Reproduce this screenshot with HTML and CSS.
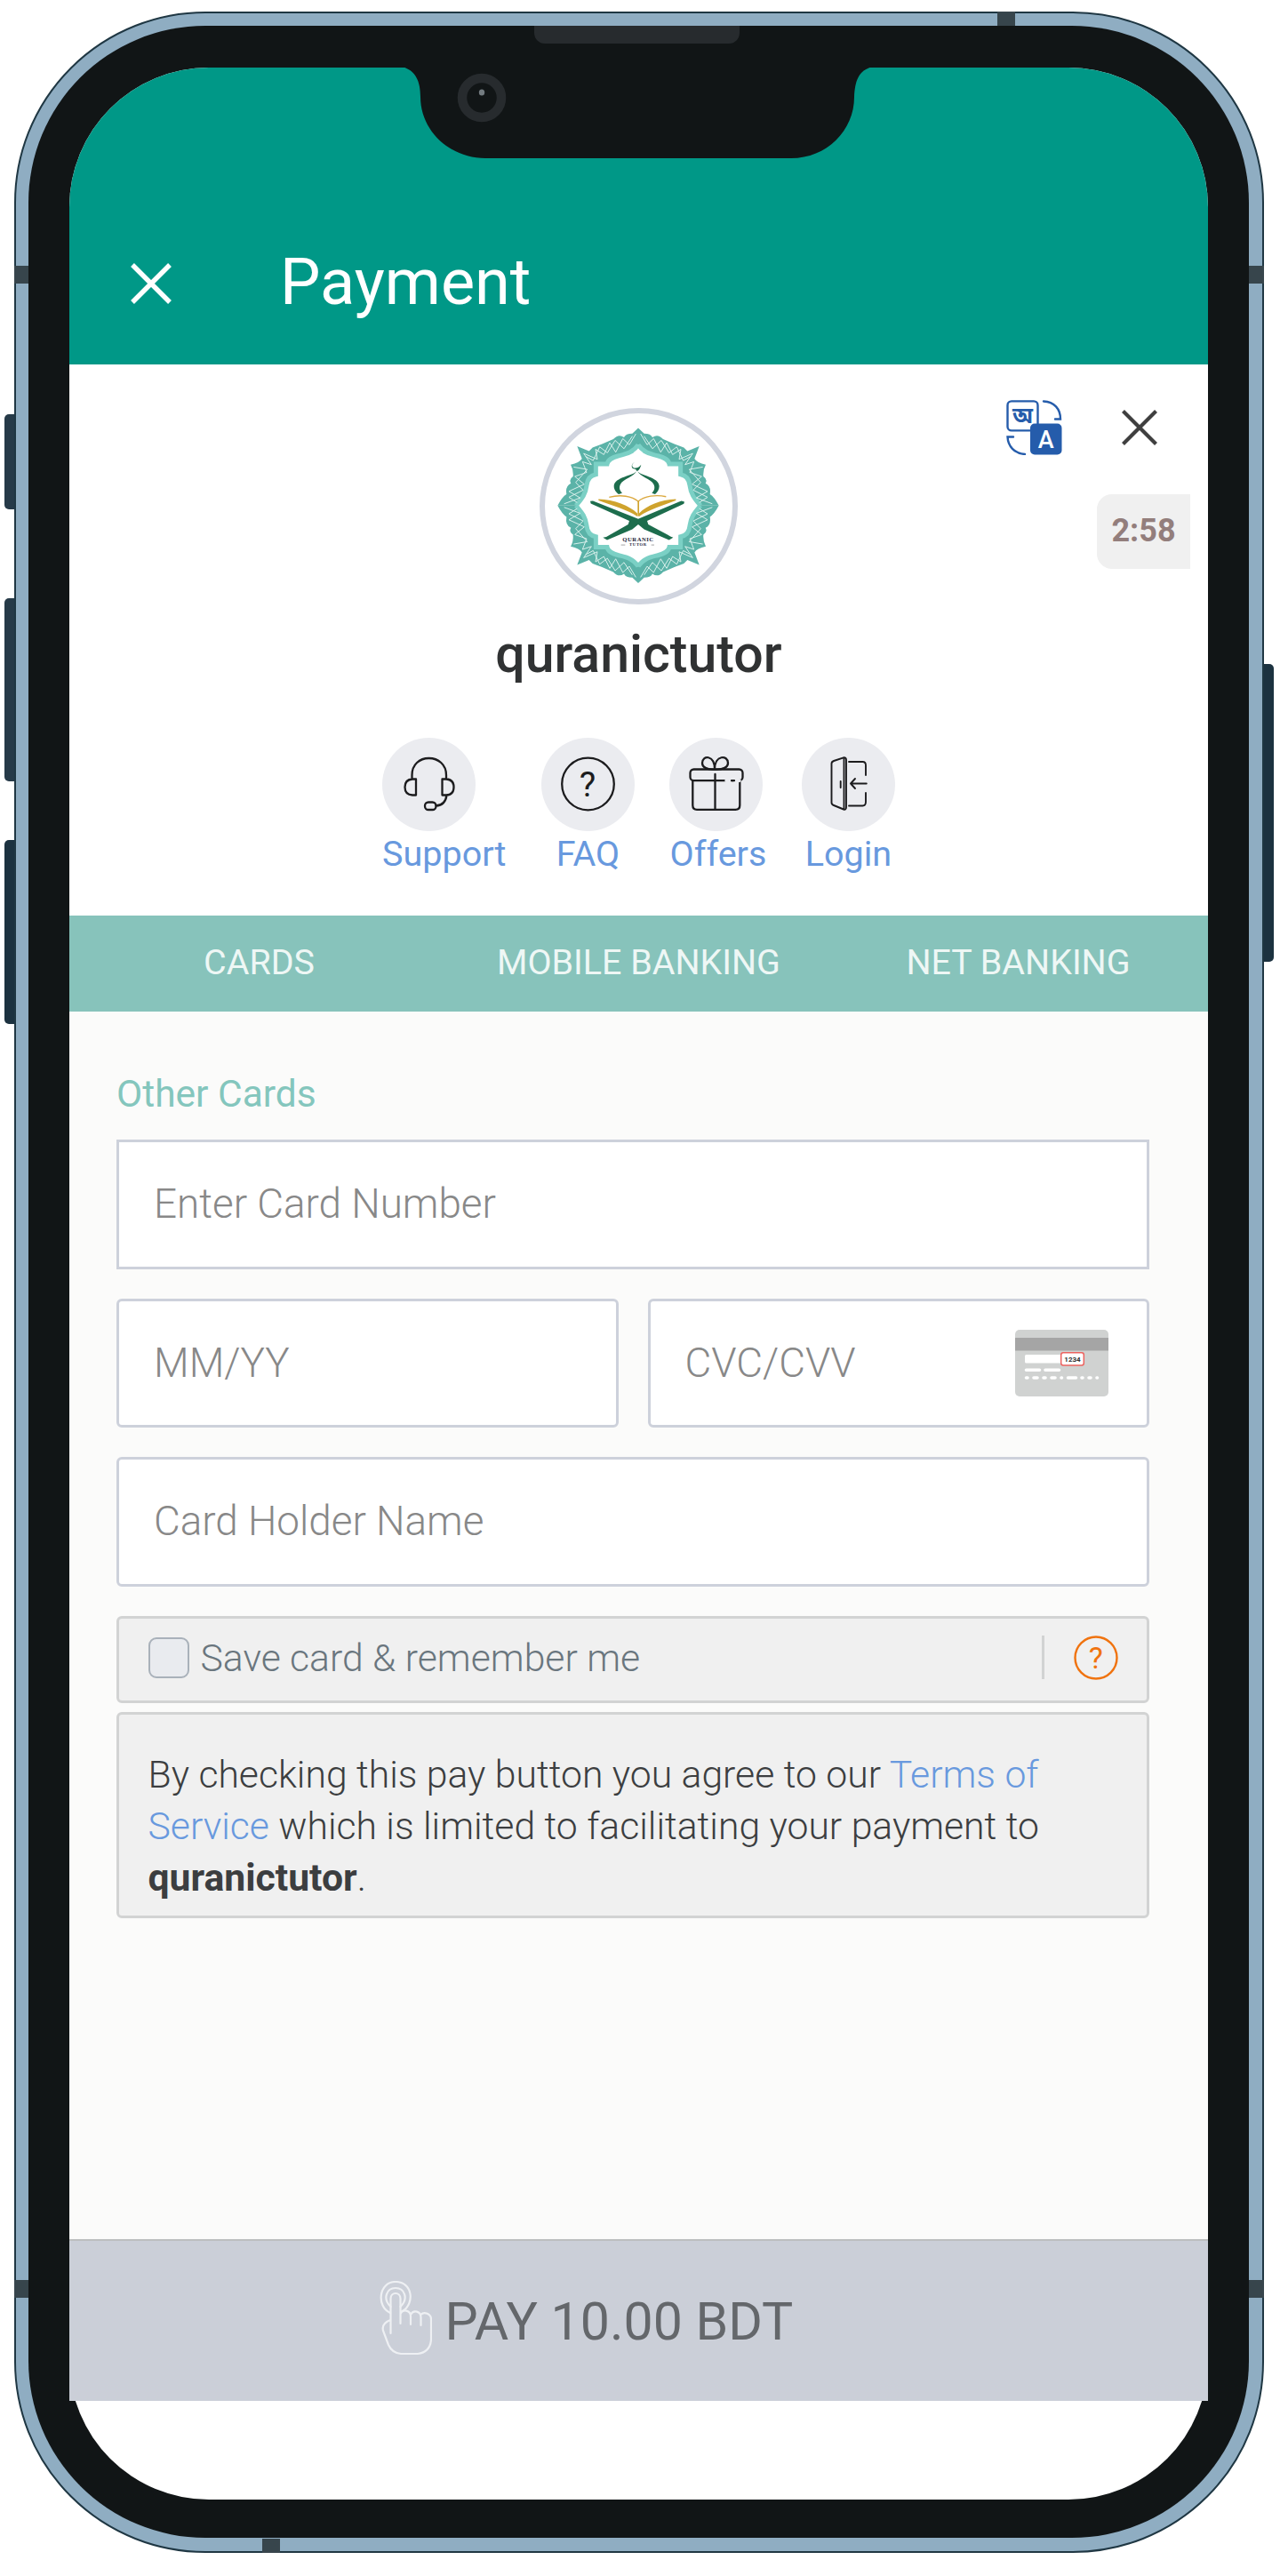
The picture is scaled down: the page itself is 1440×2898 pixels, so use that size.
FILE: index.html
```html
<!DOCTYPE html>
<html lang="en">
<head>
<meta charset="utf-8">
<title>Payment</title>
<link rel="stylesheet" href="styles.css">
</head>
<body>
<div class="device">
  <i class="key key-mute"></i><i class="key key-up"></i><i class="key key-down"></i><i class="key key-power"></i>
  <div class="frame">
    <i class="band band-top"></i><i class="band band-bottom"></i>
    <i class="band band-lt"></i><i class="band band-rt"></i><i class="band band-lb"></i><i class="band band-rb"></i>
    <div class="bezel">
      <i class="speaker"></i>
      <main class="screen">
        <svg class="notch" viewBox="0 0 540 104" aria-hidden="true">
          <path d="M0 0H8C24 4 29 17 29 34C29 72 62 103 102 103H446C486 103 517 72 517 34C518 17 521 4 538 0V-2H0Z" fill="#111516"/>
          <circle cx="98" cy="35" r="22" fill="none" stroke="#272b2e" stroke-width="10.5"/>
          <ellipse cx="98" cy="29" rx="3.2" ry="3.6" fill="#737b80"/>
        </svg>
        <header class="app-bar">
          <svg class="app-close" viewBox="0 0 46 46"><path d="M2 2L44 44M44 2L2 44" stroke="#fff" stroke-width="5.4"/></svg>
          <h1>Payment</h1>
        </header>

        <section class="merchant">
          <div class="corner">
            <svg class="translate" viewBox="0 0 63 62">
              <g fill="none" stroke="#255cab" stroke-width="2.4" stroke-linecap="round">
                <rect x="1.5" y="1.4" width="34" height="33" rx="4.5"/>
                <path d="M42 1.5C54 2 61 10 61 21.5H55M8 41.5H1.5C2 52 9 60 21 61"/>
              </g>
              <rect x="27" y="26.5" width="35.500" height="35" rx="5" fill="#255cab"/>
              <text class="bn" x="18.500" y="26" text-anchor="middle">অ</text>
              <text class="latin" x="44.800" y="54" text-anchor="middle">A</text>
            </svg>
            <svg class="close" viewBox="0 0 40 40"><path d="M1.500 1.500L38.500 38.500M38.500 1.500L1.500 38.500" stroke="#3f3f3f" stroke-width="4.200"/></svg>
          </div>
          <div class="timer">2:58</div>

          <div class="logo">
            <svg viewBox="-315 -311 630 622">
              <defs>
                <g id="quarter">
                  <path fill="#5bb3a8" d="M0 -262L-20 -243Q-42 -243 -48 -230Q-66 -244 -84 -224L-122 -208L-154 -196L-166 -184L-206 -200L-190 -158Q-198 -144 -228 -138Q-218 -120 -220 -98Q-235 -88 -227 -75Q-247 -66 -242 -38Q-256 -30 -272 0H-205C-186 -30 -172 -45 -172 -78C-170 -98 -152 -105 -140 -108V-140H-104C-98 -158 -80 -164 -62 -168C-32 -174 -12 -188 0 -207Z"/>
                  <path fill="none" stroke="#7bd0c5" stroke-width="15" d="M0 -205C-18 -178 -42 -174 -66 -168C-88 -162 -102 -156 -105 -140H-143V-105C-160 -102 -172 -90 -174 -68C-178 -36 -192 -22 -210 0"/>
                  <path fill="none" stroke="#d9f0ec" stroke-width="3" d="M-8 -242L-30 -205L-52 -226L-76 -180L-96 -212L-116 -172L-144 -190L-138 -156L-184 -176L-158 -138L-188 -148L-174 -112L-214 -98L-182 -72L-234 -48L-196 -26L-250 -6M-20 -234L-48 -192L-78 -220L-104 -178L-130 -198L-152 -152L-178 -166M-218 -130L-172 -122L-211 -78L-186 -52L-234 -28L-206 -10"/>
                </g>
              </defs>
              <use href="#quarter"/><use href="#quarter" transform="scale(-1 1)"/>
              <use href="#quarter" transform="scale(1 -1)"/><use href="#quarter" transform="scale(-1 -1)"/>
              <g fill="#1d6d4d">
                <path d="M-5 -118C-12 -100 -82 -98 -82 -65C-82 -53 -74 -44 -66 -38L-54 -42C-62 -50 -66 -60 -60 -72C-50 -92 -14 -96 -5 -118ZM-3 -118C4 -100 71 -98 71 -65C71 -53 64 -44 57 -38L46 -42C54 -50 58 -60 52 -72C42 -92 6 -96 -3 -118Z"/>
                <path d="M-12 -148Q-28 -134 -14 -127Q-2 -124 10 -138Q6 -122 -2 -117H-6L-8 -122Q-28 -124 -20 -140Z"/>
                <path d="M-162 -15L-153 -16L0 45L146 -16L156 -13L154 -6L30 52L34 64L100 99Q108 105 118 108L104 116L20 80L0 64L-20 80L-105 116L-119 108Q-106 107 -96 99L-34 64L-30 52L-160 -7Z"/>
              </g>
              <g fill="#cfa32d">
                <path d="M-134 -22C-80 -20 -30 0 -3 26V37C-40 12 -90 0 -134 -17ZM127 -22C75 -20 28 0 3 26V37C38 12 85 0 127 -17Z"/>
                <path d="M-98 -28C-60 -38 -20 -32 0 -14C20 -32 60 -38 94 -30" fill="none" stroke="#dba83d" stroke-width="4"/>
                <path d="M-2 -14H3V36H-2Z"/>
              </g>
              <text class="logo-name" y="120" text-anchor="middle">QURANIC</text>
              <text class="logo-sub" y="137" text-anchor="middle">TUTOR</text>
              <path d="M-58 133H-44M44 133H54" stroke="#777" stroke-width="2"/>
            </svg>
          </div>
          <h2>quranictutor</h2>

          <nav class="links">
            <a class="link link-start">
              <svg viewBox="0 0 105 105"><g><path d="M33.500 46V42C33.500 30 42 23 52.500 23S72 30 72 42V46M38 46.500V64.500H34Q25.500 64 25.500 55.500T34 46.500ZM67.500 46.500V64.500H72Q80.500 64 80.500 55.500T72 46.500ZM72.500 64.500Q71 76 60.500 76.500"/><rect x="48" y="72.500" width="12.500" height="8.500" rx="4"/></g></svg>
              <span>Support</span>
            </a>
            <a class="link">
              <svg viewBox="0 0 105 105"><circle class="ln" cx="52.500" cy="52" r="29.300"/><text x="52" y="66" text-anchor="middle">?</text></svg>
              <span>FAQ</span>
            </a>
            <a class="link link-start">
              <svg viewBox="0 0 105 105"><g><rect x="23.500" y="35.500" width="59" height="12.700" rx="4"/><path d="M26.300 48V76Q26.300 80.800 31 80.800H74.500Q79.300 80.800 79.300 76V48M51.500 41V80.800M51 35.500C42 36 37 33 37 28.500C37 19 51 19 51 35.500C51 19 66 19 66 28.500C66 33 61 36 51 35.500"/><path d="M64 48.200H69M73 48.200H79" stroke="#ebecf0" stroke-width="3.500"/><path d="M70 48.200H73"/></g></svg>
              <span>Offers</span>
            </a>
            <a class="link">
              <svg viewBox="0 0 105 105"><g class="fine"><path d="M33.500 29Q33.500 27 36 26L47 22.300Q50 22 50 25V78Q50 81.500 47 80.500L36 76Q33.500 75 33.500 73ZM47.500 24V79M43.700 49V56M53 27H68.500Q72 27 72 31V42M72 62V72Q72 76.500 68.500 76.500H53M72.800 51.500H55M60 46L55 51.500L60 57"/></g></svg>
              <span>Login</span>
            </a>
          </nav>
        </section>

        <nav class="tabs"><a>CARDS</a><a>MOBILE BANKING</a><a>NET BANKING</a></nav>

        <section class="form">
          <h3>Other Cards</h3>
          <div class="field square">Enter Card Number</div>
          <div class="pair">
            <div class="field">MM/YY</div>
            <div class="field">CVC/CVV
              <svg class="cvv" viewBox="0 0 105 75">
                <rect width="105" height="75" rx="5" fill="#d0d2d1"/><path d="M0 9H105V23.500H0Z" fill="#a5a5a5"/>
                <rect x="11" y="28" width="42" height="9.500" rx="1.500" fill="#fff"/>
                <rect x="51.700" y="25.700" width="25.600" height="14.300" rx="2.500" fill="#fff" stroke="#ec6360" stroke-width="1.500"/>
                <text x="64.500" y="36" text-anchor="middle">1234</text>
                <path d="M12.500 45.200H27.500M34 45.200H49.500M12.500 54H14M21 54H25M32 54H34M41 54H45M52 54H52.500M59.500 54H68.500M75 54H76M83 54H85M92 54H92.500" stroke="#fff" stroke-width="3.600" stroke-linecap="round"/>
              </svg>
            </div>
          </div>
          <div class="field">Card Holder Name</div>
          <div class="save">
            <i class="check"></i><span>Save card &amp; remember me</span>
            <i class="rule"></i>
            <svg class="help" viewBox="0 0 50 50"><circle cx="25" cy="25" r="23.500"/><text x="24.700" y="37" text-anchor="middle">?</text></svg>
          </div>
          <p class="terms">By checking this pay button you agree to our <a>Terms of<br>Service</a> which is limited to facilitating your payment to<br><b>quranictutor</b>.</p>
        </section>

        <div class="pay">
          <svg viewBox="0 0 59 84"><g fill="none" stroke="#eef0f3" stroke-width="2.200" stroke-linecap="round">
            <path d="M12.500 59V20C12.500 12 23.500 12 23.500 20V48M23.500 37C26 31 35 33 35 40V49M35 38C38 32 46.500 34 46.500 41V50M46.500 38C50 34 58 37 58 43V66Q57 80 43 82H24Q14 81 10 72L4 56Q2 48 12 44"/>
            <path d="M12.500 29C3 20 8 8 18 8S33 20 23.500 29M12 36C-4 29 -1 1 18 1S40 25 26 34"/>
          </g></svg>
          <span>PAY 10.00 BDT</span>
        </div>
      </main>
    </div>
  </div>
</div>
</body>
</html>
```
FILE: styles.css
```css
* { box-sizing: border-box; }
body { margin: 0; background: #fff; font-family: Roboto, "Liberation Sans", sans-serif; color: #333; }
h1, h2, h3, p { margin: 0; font-weight: 400; }
svg { display: block; flex: none; }

/* Device shell */
.device { position: relative; width: 1440px; height: 2898px; padding: 13px 18px 26px 16px; }
.key { position: absolute; width: 13px; left: 5px; background: #263a48; border-radius: 5px 0 0 5px; }
.key-mute { top: 466px; height: 107px; }
.key-up { top: 673px; height: 206px; }
.key-down { top: 945px; height: 207px; background: #1c3240; }
.key-power { top: 747px; height: 335px; left: 1420px; background: #1c3240; border-radius: 0 5px 5px 0; }
.frame { position: relative; height: 2859px; padding: 14px 15px 14px 14px; border: 2px solid #1f3743; border-radius: 215px; background: #8fadc2; }
.band { position: absolute; background: #37454c; }
.band-top { top: -2px; left: 1104px; width: 20px; height: 16px; }
.band-bottom { bottom: -2px; left: 277px; width: 20px; height: 16px; }
.band-lt, .band-lb { left: -2px; width: 16px; height: 19.500px; }
.band-rt, .band-rb { right: -2px; width: 17px; height: 19.500px; }
.band-lt, .band-rt { top: 284px; }
.band-lb, .band-rb { top: 2550px; }
.bezel { position: relative; height: 2826px; padding: 47px 46px 43px; border-radius: 199px; background: #111516; }
.speaker { position: absolute; top: 0; left: 569px; width: 231px; height: 19.500px; background: #272b2e; border-radius: 0 0 12px 12px; }
.screen { position: relative; display: flex; flex-direction: column; height: 2736px; background: #fff; border-radius: 157px; }
.notch { position: absolute; top: -1px; left: 366px; width: 540px; height: 104px; }

/* App bar */
.app-bar { display: flex; align-items: flex-end; height: 333.500px; padding-left: 69px; gap: 122px; background: #009887; border-radius: 157px 157px 0 0; }
.app-close { width: 46px; height: 46px; margin-bottom: 67.500px; }
.app-bar h1 { margin-bottom: 50px; font-size: 72px; line-height: 84px; color: #fff; }

/* Merchant */
.merchant { position: relative; display: flex; flex-direction: column; align-items: center; height: 620.500px; padding-top: 49px; }
.corner { position: absolute; top: 40px; right: 57px; display: flex; align-items: center; gap: 67px; }
.translate { width: 63px; height: 62px; }
.translate .bn { font: 700 25px "Noto Sans Bengali", "Noto Sans", sans-serif; fill: #255cab; }
.translate .latin { font: 500 27px Roboto, sans-serif; fill: #fff; }
.close { width: 40px; height: 40px; }
.timer { position: absolute; top: 146px; right: 20px; width: 105px; height: 84px; line-height: 82px; text-align: center; font-size: 36px; font-weight: 700; color: #937e7c; background: #f0f0f0; border-radius: 17px 0 0 17px; }
.logo { width: 223px; height: 221px; border: 6px solid #d1d5df; border-radius: 50%; }
.logo svg { width: 210px; height: 207.500px; }
.logo-name { font: 700 20px "Liberation Serif", serif; letter-spacing: 1.500px; fill: #24263a; }
.logo-sub { font: 700 14px "Liberation Serif", serif; letter-spacing: 2px; fill: #24263a; }
.merchant h2 { margin-top: 21px; font-size: 59px; line-height: 70px; font-weight: 500; color: #303233; }
.links { display: flex; gap: 39.500px; margin-top: 59px; }
.link { display: flex; flex-direction: column; align-items: center; gap: 3px; font-size: 39.500px; line-height: 46px; color: #6899de; }
.link-start { align-items: flex-start; }
.link svg { width: 105px; height: 105px; border-radius: 50%; background: #ebecf0; }
.link g, .ln { fill: none; stroke: #1c1c1e; stroke-width: 2.300; stroke-linecap: round; stroke-linejoin: round; }
.link .fine { stroke-width: 1.900; }
.link text { font-size: 39px; fill: #1c1c1e; }

/* Tabs */
.tabs { display: grid; grid-template-columns: repeat(3, 1fr); height: 108px; background: #87c3bb; }
.tabs a { text-align: center; font-size: 39.400px; line-height: 105px; color: #eef7f5; }

/* Card form */
.form { height: 1381px; padding: 68px 66px 0 53px; background: #fbfbfa; }
.form h3 { margin-bottom: 26px; font-size: 42.500px; line-height: 50px; color: #84c6bd; }
.field { display: flex; align-items: center; justify-content: space-between; height: 145.500px; margin-bottom: 33px; padding: 0 43px 0 39px; border: 3px solid #cdd1db; border-radius: 6px; background: #fff; font-size: 45.800px; font-weight: 300; color: #888; }
.field.square { border-radius: 0; }
.pair { display: grid; grid-template-columns: 1fr 1fr; gap: 33px; }
.cvv { width: 105px; height: 75px; }
.cvv text { font-size: 8px; font-weight: 700; fill: #333; }
.save { display: flex; align-items: center; height: 98px; padding: 0 32px 4px 32.500px; border: 3px solid #d2d3d3; border-radius: 6px; background: #f0f0f0; font-size: 42.700px; font-weight: 300; color: #6a767e; }
.check { width: 46px; height: 46px; margin-right: 13px; border: 2px solid #a9b1ba; border-radius: 9px; background: #e9ebef; }
.rule { width: 3px; height: 49px; margin-left: auto; margin-right: 33px; background: #d2d3d3; }
.help { width: 50px; height: 50px; }
.help circle { fill: none; stroke: #f0730f; stroke-width: 2.400; }
.help text { font-size: 34px; font-weight: 400; fill: #f0730f; }
.terms { height: 232px; margin-top: 10px; padding: 38px 0 0 32.500px; border: 3px solid #d2d3d3; border-radius: 6px; background: #f0f0f0; font-size: 42.700px; line-height: 58.300px; font-weight: 300; color: #3c3e40; white-space: nowrap; }
.terms a { color: #6899de; }
.terms b { font-weight: 700; }

/* Pay button */
.pay { display: flex; align-items: center; gap: 15px; height: 182px; padding-left: 348.500px; border-top: 2px solid #bcbebf; background: #cbcfd8; font-size: 59px; color: #64676b; }
.pay svg { width: 59px; height: 84px; margin-top: -6px; }
```
